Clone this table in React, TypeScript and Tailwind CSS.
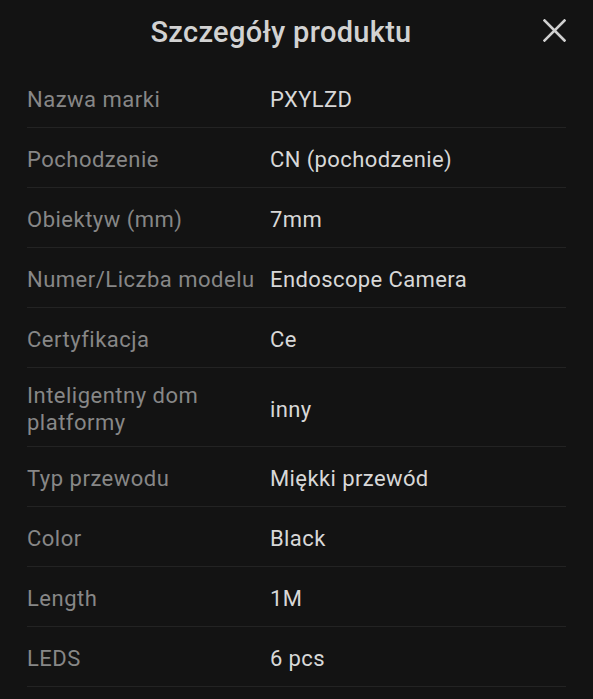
import React from "react";

const rows: [string, string][] = [
  ["Nazwa marki", "PXYLZD"],
  ["Pochodzenie", "CN (pochodzenie)"],
  ["Obiektyw (mm)", "7mm"],
  ["Numer/Liczba modelu", "Endoscope Camera"],
  ["Certyfikacja", "Ce"],
  ["Inteligentny dom platformy", "inny"],
  ["Typ przewodu", "Miękki przewód"],
  ["Color", "Black"],
  ["Length", "1M"],
  ["LEDS", "6 pcs"],
];

export default function App() {
  return (
    <div
      className="w-[593px] h-[699px] overflow-hidden bg-[#131313]"
      style={{ fontFamily: "Roboto, 'Noto Sans', sans-serif" }}
    >
      <div className="flex items-center h-[68px] pb-[7px] pl-[27px] pr-[27px]">
        <div className="flex-1 text-center text-[29px] tracking-[0.3px] font-medium text-[#d2d2d2] leading-none pt-[4px]">
          Szczegóły produktu
        </div>
        <div className="w-[31px] flex justify-end">
          <svg width="23" height="23" viewBox="0 0 23 23" fill="none">
            <path
              d="M1.5 1.5L21.5 21.5M21.5 1.5L1.5 21.5"
              stroke="#d0d0d0"
              strokeWidth="2.6"
              strokeLinecap="square"
            />
          </svg>
        </div>
      </div>
      <div className="px-[27px]">
        {rows.map(([k, v]) => (
          <div
            key={k}
            className="flex items-center min-h-[60px] pt-[14px] pb-[10px] border-b border-[#232323]"
          >
            <div className="w-[243px] shrink-0 text-[22px] tracking-[0.5px] leading-[27px] text-[#878787] pr-[2px]">
              {k}
            </div>
            <div className="flex-1 text-[22px] tracking-[0.4px] leading-[27px] text-[#d8d8d8]">{v}</div>
          </div>
        ))}
      </div>
    </div>
  );
}
